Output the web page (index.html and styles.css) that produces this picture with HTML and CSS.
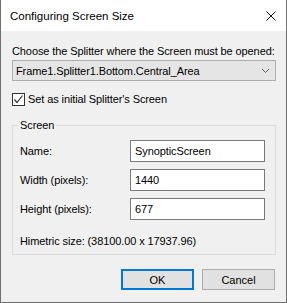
FILE: index.html
```html
<!DOCTYPE html>
<html lang="en">
<head>
    <meta charset="UTF-8">
    <title>Configuring Screen Size</title>
    <link rel="stylesheet" href="styles.css">
</head>
<body>
    <div class="window">
        <div class="titlebar">
            <span class="title">Configuring Screen Size</span>
            <svg class="close" width="10" height="10" viewBox="0 0 10 10">
                <path d="M0.5 0.5 L9.5 9.5 M9.5 0.5 L0.5 9.5" stroke="#111" stroke-width="1" fill="none"/>
            </svg>
        </div>
        <div class="content">
            <div class="prompt">Choose the Splitter where the Screen must be opened:</div>
            <div class="combo">
                <span>Frame1.Splitter1.Bottom.Central_Area</span>
                <svg class="chevron" width="7" height="4" viewBox="0 0 7 4">
                    <path d="M0 0 L3.5 3.5 L7 0" stroke="#606060" stroke-width="1" fill="none"/>
                </svg>
            </div>
            <label class="check">
                <span class="box">
                    <svg width="11" height="11" viewBox="0 0 11 11">
                        <path d="M1.5 5.5 L4 8.5 L9.5 1.5" stroke="#333" stroke-width="1.2" fill="none"/>
                    </svg>
                </span>
                Set as initial Splitter's Screen
            </label>
            <div class="group">
                <span class="legend">Screen</span>
                <div class="rows">
                    <div class="row">
                        <span class="label">Name:</span>
                        <input class="field" type="text" value="SynopticScreen">
                    </div>
                    <div class="row">
                        <span class="label">Width (pixels):</span>
                        <input class="field" type="text" value="1440">
                    </div>
                    <div class="row">
                        <span class="label">Height (pixels):</span>
                        <input class="field" type="text" value="677">
                    </div>
                </div>
                <div class="himetric">Himetric size: (38100.00 x 17937.96)</div>
            </div>
            <div class="buttons">
                <button class="btn btn-default">OK</button>
                <button class="btn">Cancel</button>
            </div>
        </div>
    </div>
</body>
</html>
```

FILE: styles.css
```css
body {
    margin: 0;
    font-family: 'Liberation Sans', Arial, sans-serif;
    font-size: 11px;
    line-height: 16px;
    letter-spacing: -0.1px;
    color: #000;
    white-space: nowrap;
}
.window {
    width: 287px;
    height: 303px;
    box-sizing: border-box;
    border: 1px solid #707070;
    border-top: none;
    display: flex;
    flex-direction: column;
}
.titlebar {
    height: 31px;
    background: #ffffff;
    display: flex;
    align-items: center;
    justify-content: space-between;
    padding: 0 10px 0 9px;
    flex-shrink: 0;
}
.title {
    font-size: 11.5px;
    letter-spacing: 0;
}
.content {
    flex: 1;
    background: #f0f0f0;
    padding: 12px 10px 0 11px;
    display: flex;
    flex-direction: column;
}
.combo {
    margin-top: 1px;
    height: 21px;
    box-sizing: border-box;
    border: 1px solid #adadad;
    background: #e5e5e5;
    display: flex;
    align-items: center;
    justify-content: space-between;
    padding: 0 6px 0 3px;
}
.check {
    margin-top: 10px;
    display: flex;
    align-items: center;
    gap: 3px;
}
.box {
    width: 13px;
    height: 13px;
    box-sizing: border-box;
    border: 1px solid #333;
    background: #fff;
    display: flex;
    align-items: center;
    justify-content: center;
}
.group {
    margin-top: 18px;
    padding: 0 7px 5px 7px;
    border: 1px solid #dcdcdc;
    display: flex;
    flex-direction: column;
}
.legend {
    align-self: flex-start;
    margin: -9px 0 0 -2px;
    padding: 0 2px;
    background: #f0f0f0;
}
.rows {
    display: flex;
    flex-direction: column;
    gap: 7px;
    margin-top: 7px;
}
.row {
    display: flex;
    align-items: center;
}
.label {
    width: 110px;
}
.field {
    width: 135px;
    height: 22px;
    box-sizing: border-box;
    border: 1px solid #7a7a7a;
    background: #fff;
    padding: 0 0 0 4px;
    margin: 0;
    font-family: inherit;
    font-size: 11px;
    letter-spacing: inherit;
    color: #000;
    outline: none;
}
.himetric {
    margin-top: 13px;
}
.buttons {
    margin-top: 14px;
    display: flex;
    justify-content: flex-end;
    gap: 8px;
    padding-right: 1px;
}
.btn {
    width: 73px;
    height: 21px;
    box-sizing: border-box;
    border: 1px solid #adadad;
    background: #e1e1e1;
    font-family: inherit;
    font-size: 11px;
    color: #000;
    padding: 0;
    border-radius: 0;
}
.btn-default {
    border: 2px solid #0078d7;
}
```
